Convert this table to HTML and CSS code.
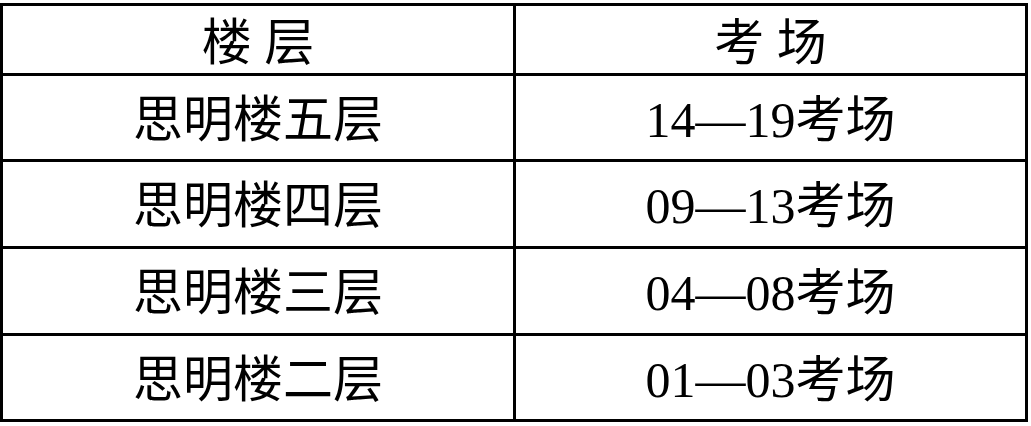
FILE: index.html
```html
<!DOCTYPE html>
<html lang="zh">
<head>
<meta charset="utf-8">
<title>楼层考场</title>
<link rel="stylesheet" href="styles.css">
</head>
<body>
<div class="grid">
  <div class="cell head">楼 层</div>
  <div class="cell head">考 场</div>
  <div class="cell">思明楼五层</div>
  <div class="cell">14—19考场</div>
  <div class="cell">思明楼四层</div>
  <div class="cell">09—13考场</div>
  <div class="cell">思明楼三层</div>
  <div class="cell">04—08考场</div>
  <div class="cell">思明楼二层</div>
  <div class="cell">01—03考场</div>
</div>
</body>
</html>
```

FILE: styles.css
```css
html, body {
  margin: 0;
  padding: 0;
  background: #fff;
}
body {
  padding-top: 3px;
}
.grid {
  width: 1028px;
  box-sizing: border-box;
  padding: 3px;
  background: #000;
  display: grid;
  grid-template-columns: 510px 509px;
  grid-template-rows: 67px 83px 84px 84px 83px;
  gap: 3px;
}
.cell {
  background: #fff;
  display: flex;
  align-items: center;
  justify-content: center;
  font-family: "Liberation Serif", "Noto Sans CJK SC", serif;
  font-size: 50px;
  line-height: 1;
  color: #000;
  padding-top: 4px;
  box-sizing: border-box;
}
.head {
  padding-top: 6px;
}
```
